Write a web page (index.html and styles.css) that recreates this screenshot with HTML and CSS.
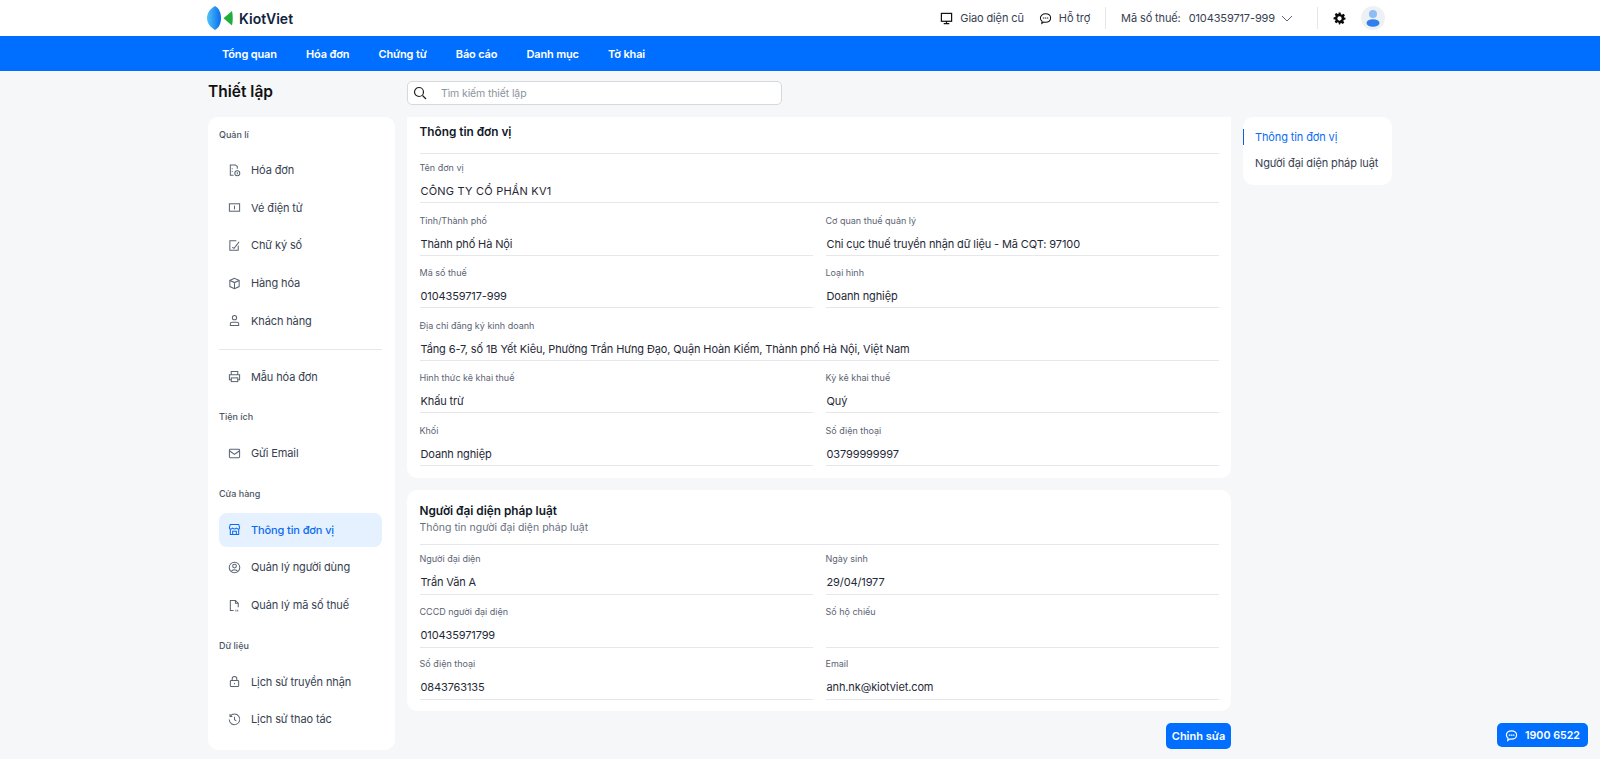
FILE: index.html
```html
<!DOCTYPE html>
<html lang="vi">
<head>
<meta charset="utf-8">
<title>Thiết lập</title>
<link rel="stylesheet" href="styles.css">
</head>
<body>
<header class="top">
  <div class="logo">
    <svg class="logo-mark" width="26" height="24" viewBox="0 0 26 24"><defs><linearGradient id="lg" x1="0" y1="0" x2="1" y2="0"><stop offset="0" stop-color="#4fc3f7"/><stop offset="1" stop-color="#0a6cf0"/></linearGradient></defs><path d="M8 0C3 3 0 7 0 12s3 9 8 12c4-2 6-7 6-12S12 2 8 0z" fill="url(#lg)"/><path d="M25 5l-8.500 7.300 8.500 7.200c1-4.500 1-10 0-14.500z" fill="#1fae3c"/></svg>
    <span class="logo-text">KiotViet</span>
  </div>
  <div class="top-right">
    <span class="top-link"><svg width="13" height="13" viewBox="0 0 14 14" fill="none" stroke="#111" stroke-width="1.300"><rect x="1.500" y="1.500" width="11" height="8.500"/><path d="M4 12.500h6M7 10v2.500"/></svg>Giao diện cũ</span>
    <span class="top-link last"><svg width="13" height="13" viewBox="0 0 14 14" fill="none" stroke="#111" stroke-width="1.100"><path d="M7 2c3.200 0 5.500 1.900 5.500 4.500S10.200 11 7 11c-.700 0-1.300-.100-1.900-.200L3 12.300l.3-2.300C2.100 9.200 1.500 8 1.500 6.500 1.500 3.900 3.800 2 7 2z"/><path d="M4.600 6.500h.6M6.800 6.500h.6M9 6.500h.6" stroke-linecap="round"/></svg>Hỗ trợ</span>
    <span class="vline"></span>
    <span class="tax"><span class="tax-label">Mã số thuế:</span><span>0104359717-999</span><svg width="12" height="7" viewBox="0 0 12 7" fill="none" stroke="#667" stroke-width="1"><path d="M1 1l5 5 5-5"/></svg></span>
    <span class="vline"></span>
    <svg class="gear" width="13" height="13" viewBox="0 0 24 24"><path fill="#0a0a0a" fill-rule="evenodd" d="M10 1h4l.6 3.200 1.800.8 2.800-1.800 2.800 2.800-1.800 2.800.8 1.800L23 10v4l-3.200.6-.8 1.800 1.800 2.800-2.800 2.800-2.800-1.800-1.800.8L13 23h-2l-.6-3.200-1.800-.8-2.800 1.800-2.800-2.800 1.800-2.800-.8-1.800L1 14v-4l3.200-.6.800-1.800L3.200 4.800 6 2l2.800 1.800 1.800-.8zM12 8a4 4 0 100 8 4 4 0 000-8z"/></svg>
    <span class="avatar"><svg width="24" height="24" viewBox="0 0 24 24"><circle cx="12" cy="8" r="4" fill="#8fbcf5"/><ellipse cx="12" cy="17" rx="6.500" ry="3.800" fill="#2f80ed"/></svg></span>
  </div>
</header>
<nav class="nav">
  <a>Tổng quan</a><a>Hóa đơn</a><a>Chứng từ</a><a>Báo cáo</a><a>Danh mục</a><a>Tờ khai</a>
</nav>
<div class="page">
  <aside class="left">
    <h1 class="page-title">Thiết lập</h1>
    <div class="side">
      <div class="side-label first">Quản lí</div>
      <a class="item"><svg class="ic" viewBox="0 0 14 14"><path d="M10 5V2.800L8 1H2.500v11H6"/><path d="M4 5h1M4 8h1"/><circle cx="10" cy="10" r="2.700"/><path d="M10 9v2"/></svg>Hóa đơn</a>
      <a class="item"><svg class="ic" viewBox="0 0 14 14"><rect x="1.500" y="3" width="11" height="8"/><path d="M7 5v4"/></svg>Vé điện tử</a>
      <a class="item"><svg class="ic" viewBox="0 0 14 14"><path d="M11 7v5H2V2h7"/><path d="M4.500 9l2 1 5.500-7"/></svg>Chữ ký số</a>
      <a class="item"><svg class="ic" viewBox="0 0 14 14"><path d="M7 1.500l5 2.200v6.600l-5 2.200-5-2.200V3.700z"/><path d="M2 3.700l5 2.300 5-2.300M7 6v6.500"/></svg>Hàng hóa</a>
      <a class="item"><svg class="ic" viewBox="0 0 14 14"><circle cx="7" cy="4" r="2.300"/><path d="M2.500 12.500V10.500c0-1 1-1.500 2-1.500h5c1 0 2 .500 2 1.500v2z"/></svg>Khách hàng</a>
      <div class="side-rule"></div>
      <a class="item"><svg class="ic" viewBox="0 0 14 14"><path d="M3.500 5V1.500h7V5M3.500 10.500H1.500V5h11v5.500h-2"/><rect x="3.500" y="8.500" width="7" height="4"/></svg>Mẫu hóa đơn</a>
      <div class="side-label">Tiện ích</div>
      <a class="item"><svg class="ic" viewBox="0 0 14 14"><rect x="1.500" y="2.500" width="11" height="9" rx="1"/><path d="M1.500 4l5.500 4 5.500-4"/></svg>Gửi Email</a>
      <div class="side-label">Cửa hàng</div>
      <a class="item active"><svg class="ic" viewBox="0 0 14 14"><path d="M2.500 1.500h9l1 3.500c0 1-1 1.500-1.500 1.500S9.500 6 9 5.500c-.500.500-1.200 1-2 1s-1.500-.500-2-1c-.500.500-1.300 1-2 1S1.500 6 1.500 5z"/><path d="M2.500 6.500v6h9v-6M5 12.500V9h4v3.500"/></svg>Thông tin đơn vị</a>
      <a class="item"><svg class="ic" viewBox="0 0 14 14"><circle cx="7" cy="7" r="5.700"/><circle cx="7" cy="5.500" r="2"/><path d="M3.500 11.300c.8-1.500 2-2 3.500-2s2.700.500 3.500 2"/></svg>Quản lý người dùng</a>
      <a class="item"><svg class="ic" viewBox="0 0 14 14"><path d="M6 12.500H2.500v-11H8l3 3V9"/><path d="M8 1.500v3h3"/><path d="M8 12.500h4" stroke-dasharray="1 1" stroke-width="1.800"/></svg>Quản lý mã số thuế</a>
      <div class="side-label">Dữ liệu</div>
      <a class="item"><svg class="ic" viewBox="0 0 14 14"><rect x="2.500" y="6" width="9" height="6.500" rx="1"/><path d="M4.500 6V4a2.500 2.500 0 015 0v2M7 8.500v1.500"/></svg>Lịch sử truyền nhận</a>
      <a class="item"><svg class="ic" viewBox="0 0 14 14"><path d="M2.400 3.500A5.700 5.700 0 111.300 7"/><path d="M2.200 1.200v2.500h2.500M7 4v3.300l2 1.200"/></svg>Lịch sử thao tác</a>
    </div>
  </aside>

  <main class="main">
    <label class="search"><svg width="14" height="14" viewBox="0 0 14 14" fill="none" stroke="#222" stroke-width="1.200"><circle cx="6" cy="6" r="4.500"/><path d="M9.500 9.500l3.500 3.500"/></svg><span>Tìm kiếm thiết lập</span></label>

    <section class="card one">
      <div class="card-head"><h2>Thông tin đơn vị</h2></div>
      <div class="form">
        <div class="f wide"><div class="l">Tên đơn vị</div><div class="v caps">CÔNG TY CỔ PHẦN KV1</div></div>
        <div class="f"><div class="l">Tỉnh/Thành phố</div><div class="v">Thành phố Hà Nội</div></div>
        <div class="f"><div class="l">Cơ quan thuế quản lý</div><div class="v">Chi cục thuế truyền nhận dữ liệu - Mã CQT: 97100</div></div>
        <div class="f"><div class="l">Mã số thuế</div><div class="v">0104359717-999</div></div>
        <div class="f"><div class="l">Loại hình</div><div class="v">Doanh nghiệp</div></div>
        <div class="f wide"><div class="l">Địa chỉ đăng ký kinh doanh</div><div class="v">Tầng 6-7, số 1B Yết Kiêu, Phường Trần Hưng Đạo, Quận Hoàn Kiếm, Thành phố Hà Nội, Việt Nam</div></div>
        <div class="f"><div class="l">Hình thức kê khai thuế</div><div class="v">Khấu trừ</div></div>
        <div class="f"><div class="l">Kỳ kê khai thuế</div><div class="v">Quý</div></div>
        <div class="f"><div class="l">Khối</div><div class="v">Doanh nghiệp</div></div>
        <div class="f"><div class="l">Số điện thoại</div><div class="v">03799999997</div></div>
      </div>
    </section>

    <section class="card two">
      <div class="card-head sub"><h2>Người đại diện pháp luật</h2><p>Thông tin người đại diện pháp luật</p></div>
      <div class="form">
        <div class="f"><div class="l">Người đại diện</div><div class="v">Trần Văn A</div></div>
        <div class="f"><div class="l">Ngày sinh</div><div class="v">29/04/1977</div></div>
        <div class="f"><div class="l">CCCD người đại diện</div><div class="v">010435971799</div></div>
        <div class="f"><div class="l">Số hộ chiếu</div><div class="v"></div></div>
        <div class="f"><div class="l">Số điện thoại</div><div class="v">0843763135</div></div>
        <div class="f"><div class="l">Email</div><div class="v">anh.nk@kiotviet.com</div></div>
      </div>
    </section>

    <div class="actions"><button class="edit">Chỉnh sửa</button></div>
  </main>

  <aside class="toc">
    <a class="toc-item on">Thông tin đơn vị</a>
    <a class="toc-item">Người đại diện pháp luật</a>
  </aside>
</div>
<a class="hotline"><svg width="13" height="13" viewBox="0 0 14 14" fill="none" stroke="#fff" stroke-width="1.300"><path d="M7 2c3.200 0 5.500 1.900 5.500 4.500S10.200 11 7 11c-.700 0-1.300-.100-1.900-.200L3 12.300l.3-2.300C2.100 9.200 1.500 8 1.500 6.500 1.500 3.900 3.800 2 7 2z"/><path d="M4.500 6.500h.8M6.700 6.500h.8M8.900 6.500h.8" stroke-linecap="round"/></svg>1900 6522</a>
</body>
</html>
```
FILE: styles.css
```css
* { box-sizing: border-box; }
html, body { margin: 0; height: 100%; overflow: hidden; }
body { background: #f6f7f9; font-family: Inter, "Noto Sans", sans-serif; color: #1f2937; font-size: 11px; letter-spacing: -.12px; }
h1, h2, p { margin: 0; }

.top { height: 36px; background: #fff; display: flex; align-items: center; justify-content: space-between; padding: 0 215px 0 207px; }
.logo { display: flex; align-items: center; gap: 6px; }
.logo-mark { display: block; }
.logo-text { font-size: 14px; font-weight: 600; color: #10233f; letter-spacing: 0; }
.top-right { display: flex; align-items: center; }
.top-link { display: flex; align-items: center; gap: 7px; margin-right: 15px; color: #374151; }
.top-link.last { margin-right: 15px; }
.vline { width: 1px; height: 22px; background: #e4e6e9; }
.tax { display: flex; align-items: center; margin: 0 24px 0 15px; color: #374151; }
.tax-label { margin-right: 8px; }
.tax svg { margin-left: 6px; }
.gear { margin: 0 15px 0 15px; }
.avatar { width: 24px; height: 24px; border-radius: 50%; background: #eef1f4; display: block; }
.avatar svg { display: block; }

.nav { height: 35px; background: #006fff; display: flex; align-items: center; padding: 0 222px; gap: 29.200px; }
.nav a { color: #fff; font-size: 11px; font-weight: 600; letter-spacing: -.15px; }

.page { display: grid; grid-template-columns: 187px 824px 149px; column-gap: 12px; padding: 0 208px; }
.left { min-width: 0; }
.page-title { font-size: 15.500px; font-weight: 600; color: #111; height: 46px; line-height: 42px; letter-spacing: 0; }
.side { background: #fff; border-radius: 10px; height: 633px; padding: 11px 13px 0 11px; }
.side-label { font-size: 9px; color: #4b5563; font-weight: 500; height: 14px; line-height: 14px; margin: 16.500px 0 12px; letter-spacing: 0; }
.side-label.first { margin: 0 0 11px; }
.item { display: flex; align-items: center; height: 34px; margin-bottom: 3.700px; padding-left: 9px; border-radius: 8px; color: #374151; }
.ic { width: 13px; height: 13px; margin-right: 10px; fill: none; stroke: #5b6472; stroke-width: 1.100; flex: none; }
.item.active { background: #e5f1ff; color: #0b6cf0; font-weight: 500; }
.item.active .ic { stroke: #0b6cf0; }
.side-rule { height: 1px; background: #e5e7eb; margin: 11px 0 10px; }

.main { min-width: 0; padding-top: 10px; }
.search { display: flex; align-items: center; width: 375px; height: 24px; background: #fff; border: 1px solid #d5d9de; border-radius: 5px; padding-left: 5px; gap: 14px; font-size: 10.500px; color: #8c939c; margin-bottom: 12px; }
.card { background: #fff; border-radius: 10px; padding: 0 12.500px; margin-bottom: 12px; }
.card.one { height: 361px; border-radius: 0 0 10px 10px; }
.card.two { height: 221px; }
.card-head { height: 36px; border-bottom: 1px solid #e5e7eb; padding-top: 7px; }
.one .card-head { height: 37px; }
.card-head h2 { font-size: 11.800px; font-weight: 600; color: #111827; line-height: 16px; letter-spacing: 0; }
.card-head.sub { height: 55px; padding-top: 13px; }
.card-head.sub p { font-size: 10.500px; color: #6b7280; line-height: 18px; letter-spacing: 0; }
.form { display: grid; grid-template-columns: 1fr 1fr; column-gap: 13px; }
.f { height: 52.500px; padding-top: 7px; }
.f.wide { grid-column: 1 / -1; }
.l { font-size: 9px; color: #5b6472; line-height: 14px; height: 14px; letter-spacing: 0; }
.v { margin-top: 4px; height: 24px; line-height: 25px; color: #1f2937; border-bottom: 1px solid #e5e7eb; padding-left: 1px; }
.two .v { height: 25px; }
.v.caps { letter-spacing: .2px; }

.actions { display: flex; justify-content: flex-end; }
.edit { width: 65px; height: 26px; border: 0; border-radius: 5px; background: #006fff; color: #fff; font: 600 11px Inter, sans-serif; padding: 0; }

.toc { margin-top: 46px; height: 68px; background: #fff; border-radius: 10px; padding-top: 6px; }
.toc-item { display: block; height: 27px; line-height: 27px; padding-left: 12px; color: #374151; }
.toc-item.on { color: #0b6cf0; border-left: 1px solid #0b5fd8; height: 16px; line-height: 16px; margin: 6px 0 5px; padding-left: 11px; }

.hotline { position: fixed; left: 1497px; top: 723px; width: 91px; height: 24px; background: #006fff; border-radius: 5px; color: #fff; font-size: 10.700px; font-weight: 600; display: flex; align-items: center; justify-content: center; gap: 7px; letter-spacing: 0; }
```
